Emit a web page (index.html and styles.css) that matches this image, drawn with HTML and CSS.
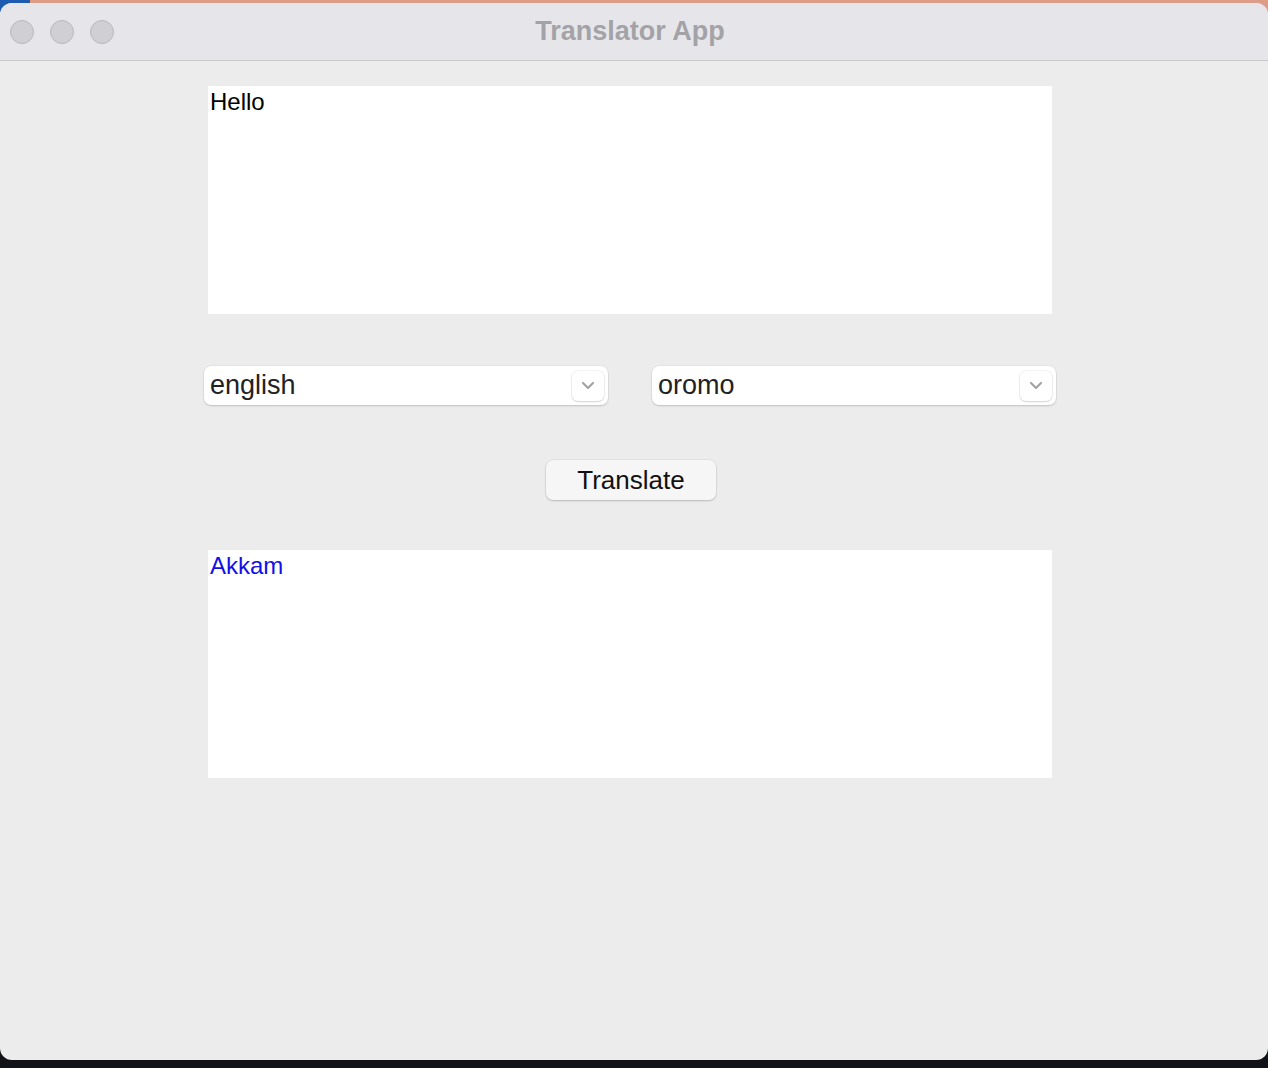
FILE: index.html
```html
<!DOCTYPE html>
<html>
<head>
<meta charset="utf-8">
<link rel="stylesheet" href="styles.css">
</head>
<body>
<div class="desktop">
  <div class="window">
    <div class="titlebar">
      <div class="lights">
        <span class="light"></span><span class="light"></span><span class="light"></span>
      </div>
      <div class="title">Translator App</div>
    </div>
    <div class="content">
      <div class="textbox">Hello</div>
      <div class="selects">
        <div class="select"><span class="sel-text">english</span><span class="sel-btn"><svg width="14" height="9" viewBox="0 0 14 9"><path d="M2 2 L7 7 L12 2" fill="none" stroke="#a0a0a0" stroke-width="2" stroke-linecap="round" stroke-linejoin="round"/></svg></span></div>
        <div class="select"><span class="sel-text">oromo</span><span class="sel-btn"><svg width="14" height="9" viewBox="0 0 14 9"><path d="M2 2 L7 7 L12 2" fill="none" stroke="#a0a0a0" stroke-width="2" stroke-linecap="round" stroke-linejoin="round"/></svg></span></div>
      </div>
      <div class="button">Translate</div>
      <div class="textbox output">Akkam</div>
    </div>
  </div>
</div>
</body>
</html>
```
FILE: styles.css
```css
* { box-sizing: border-box; }
html, body { margin: 0; padding: 0; }
body { font-family: "Liberation Sans", Arial, sans-serif; }
.desktop {
  width: 1268px;
  height: 1068px;
  background:
    linear-gradient(to right, #1c5bb0 0, #1c5bb0 30px, transparent 30px) top left / 100% 20px no-repeat,
    linear-gradient(to bottom, #dc9c88 0, #dc9c88 50%, #111318 50%, #111318 100%);
  padding-top: 3px;
}
.window {
  width: 1268px;
  height: 1057px;
  border-radius: 12px;
  overflow: hidden;
  background: #ececec;
  display: flex;
  flex-direction: column;
}
.titlebar {
  height: 58px;
  background: #e6e6ea;
  border-bottom: 1px solid #c9c9cc;
  position: relative;
  display: flex;
  align-items: center;
  justify-content: center;
  flex: none;
}
.lights {
  position: absolute;
  left: 10px;
  top: 17px;
  display: flex;
  gap: 16px;
}
.light {
  width: 24px;
  height: 24px;
  border-radius: 50%;
  background: #d0d0d4;
  border: 1px solid #b9b9bd;
}
.title {
  font-weight: bold;
  font-size: 27px;
  color: #a3a3a7;
  margin-right: 8px;
}
.content {
  display: flex;
  flex-direction: column;
  align-items: center;
  padding-top: 25px;
  padding-right: 8px;
}
.textbox {
  width: 844px;
  height: 228px;
  background: #fff;
  font-size: 24px;
  color: #000;
  padding: 3px 2px;
  line-height: 26px;
}
.output { color: #1010e8; margin-top: 50px; }
.selects {
  display: flex;
  gap: 44px;
  margin-top: 52px;
}
.select {
  width: 404px;
  height: 39px;
  background: #fff;
  border-radius: 7px;
  box-shadow: 0 0 0 0.5px rgba(0,0,0,0.06), 0 1px 2px rgba(0,0,0,0.16);
  display: flex;
  align-items: center;
  justify-content: space-between;
  padding: 0 4px 0 6px;
}
.sel-text { font-size: 27px; color: #222; }
.sel-btn {
  width: 32px;
  height: 30px;
  border-radius: 6px;
  background: #fff;
  box-shadow: 0 0 0 0.5px rgba(0,0,0,0.08), 0 1px 2px rgba(0,0,0,0.14);
  display: flex;
  align-items: center;
  justify-content: center;
}
.button {
  margin-top: 55px;
  margin-left: 2px;
  width: 170px;
  height: 40px;
  border-radius: 7px;
  background: #f6f6f6;
  box-shadow: 0 0 0 0.5px rgba(0,0,0,0.08), 0 1px 2px rgba(0,0,0,0.18);
  font-size: 26px;
  color: #111;
  display: flex;
  align-items: center;
  justify-content: center;
}
```
